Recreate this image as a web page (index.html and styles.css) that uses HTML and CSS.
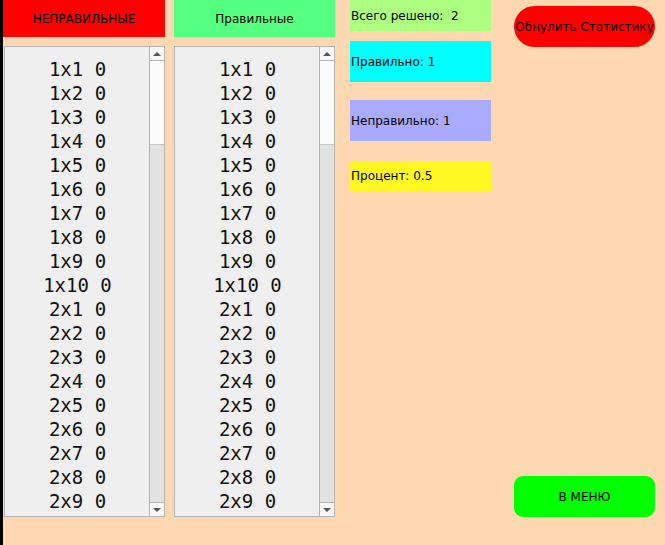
FILE: index.html
```html
<!DOCTYPE html>
<html lang="ru">
<head>
<meta charset="utf-8">
<link rel="stylesheet" href="styles.css">
</head>
<body>
<div class="app">
  <div class="col col-wrong">
    <div class="header header-red">НЕПРАВИЛЬНЫЕ</div>
    <div class="listbox">
      <div class="items">
        <div>1x1 0</div><div>1x2 0</div><div>1x3 0</div><div>1x4 0</div><div>1x5 0</div>
        <div>1x6 0</div><div>1x7 0</div><div>1x8 0</div><div>1x9 0</div><div>1x10 0</div>
        <div>2x1 0</div><div>2x2 0</div><div>2x3 0</div><div>2x4 0</div><div>2x5 0</div>
        <div>2x6 0</div><div>2x7 0</div><div>2x8 0</div><div>2x9 0</div>
      </div>
      <div class="scrollbar">
        <div class="arrow arrow-up"><span class="tri-up"></span></div>
        <div class="thumb"></div>
        <div class="track"></div>
        <div class="arrow arrow-down"><span class="tri-down"></span></div>
      </div>
    </div>
  </div>
  <div class="col col-right">
    <div class="header header-green">Правильные</div>
    <div class="listbox">
      <div class="items">
        <div>1x1 0</div><div>1x2 0</div><div>1x3 0</div><div>1x4 0</div><div>1x5 0</div>
        <div>1x6 0</div><div>1x7 0</div><div>1x8 0</div><div>1x9 0</div><div>1x10 0</div>
        <div>2x1 0</div><div>2x2 0</div><div>2x3 0</div><div>2x4 0</div><div>2x5 0</div>
        <div>2x6 0</div><div>2x7 0</div><div>2x8 0</div><div>2x9 0</div>
      </div>
      <div class="scrollbar">
        <div class="arrow arrow-up"><span class="tri-up"></span></div>
        <div class="thumb"></div>
        <div class="track"></div>
        <div class="arrow arrow-down"><span class="tri-down"></span></div>
      </div>
    </div>
  </div>
  <div class="stats">
    <div class="stat stat-total">Всего решено:&nbsp; 2</div>
    <div class="stat stat-right">Правильно: 1</div>
    <div class="stat stat-wrong">Неправильно: 1</div>
    <div class="stat stat-percent">Процент: 0.5</div>
  </div>
  <div class="actions">
    <button class="btn btn-reset">Обнулить Статистику</button>
    <button class="btn btn-menu">В МЕНЮ</button>
  </div>
</div>
</body>
</html>
```
FILE: styles.css
```css
html, body {
  margin: 0;
  padding: 0;
}
body {
  width: 665px;
  height: 545px;
  overflow: hidden;
  background: #fed8b1;
  font-family: "DejaVu Sans", sans-serif;
  color: #000;
}
.app {
  display: flex;
  height: 545px;
  border-left: 3px solid #000;
  box-sizing: border-box;
}
.col {
  display: flex;
  flex-direction: column;
  width: 162px;
}
.col-right {
  margin-left: 9px;
  width: 161px;
}
.header {
  height: 37px;
  display: flex;
  align-items: center;
  justify-content: center;
  font-size: 12px;
  margin-bottom: 9px;
}
.header-red { background: #ff0000; }
.header-green { background: #55ff7f; }
.listbox {
  height: 471px;
  box-sizing: border-box;
  border: 1px solid #b4b4b4;
  background: #efefef;
  display: flex;
  overflow: hidden;
}
.col-wrong .listbox { margin-left: 1px; }
.items {
  flex: 1;
  padding-top: 10px;
  padding-left: 1px;
  font-family: "DejaVu Sans Mono", monospace;
  font-size: 19px;
  line-height: 24px;
  text-align: center;
  overflow: hidden;
  color: #111;
}
.scrollbar {
  width: 15px;
  display: flex;
  flex-direction: column;
  border-left: 1px solid #b4b4b4;
  box-sizing: border-box;
  background: #e2e2e2;
}
.arrow {
  height: 14px;
  background: #f7f7f7;
  display: flex;
  align-items: center;
  justify-content: center;
  box-sizing: border-box;
}
.arrow-up { border-bottom: 1px solid #b4b4b4; }
.arrow-down { border-top: 1px solid #b4b4b4; }
.tri-up {
  width: 0; height: 0;
  border-left: 4px solid transparent;
  border-right: 4px solid transparent;
  border-bottom: 4px solid #555;
}
.tri-down {
  width: 0; height: 0;
  border-left: 4px solid transparent;
  border-right: 4px solid transparent;
  border-top: 4px solid #555;
}
.thumb {
  height: 84px;
  background: #fbfbfb;
  border-bottom: 1px solid #c8c8c8;
  box-sizing: border-box;
}
.track { flex: 1; }
.stats {
  margin-left: 15px;
  width: 141px;
  display: flex;
  flex-direction: column;
}
.stat {
  display: flex;
  align-items: center;
  font-size: 12px;
  padding-left: 1px;
}
.stat-total { height: 31px; background: #adff7f; }
.stat-right { height: 41px; margin-top: 10px; background: #00ffff; }
.stat-wrong { height: 41px; margin-top: 18px; background: #aaaaff; }
.stat-percent { height: 30px; margin-top: 20px; background: #fff722; }
.actions {
  margin-left: 23px;
  width: 141px;
  display: flex;
  flex-direction: column;
  padding: 6px 0 28px;
  box-sizing: border-box;
}
.btn {
  border: none;
  height: 41px;
  font-family: "DejaVu Sans", sans-serif;
  font-size: 12px;
  color: #000;
  padding: 0;
  white-space: nowrap;
}
.btn-reset {
  background: #ff0000;
  border-radius: 21px;
}
.btn-menu {
  margin-top: auto;
  background: #00ff00;
  border-radius: 9px;
}
```
